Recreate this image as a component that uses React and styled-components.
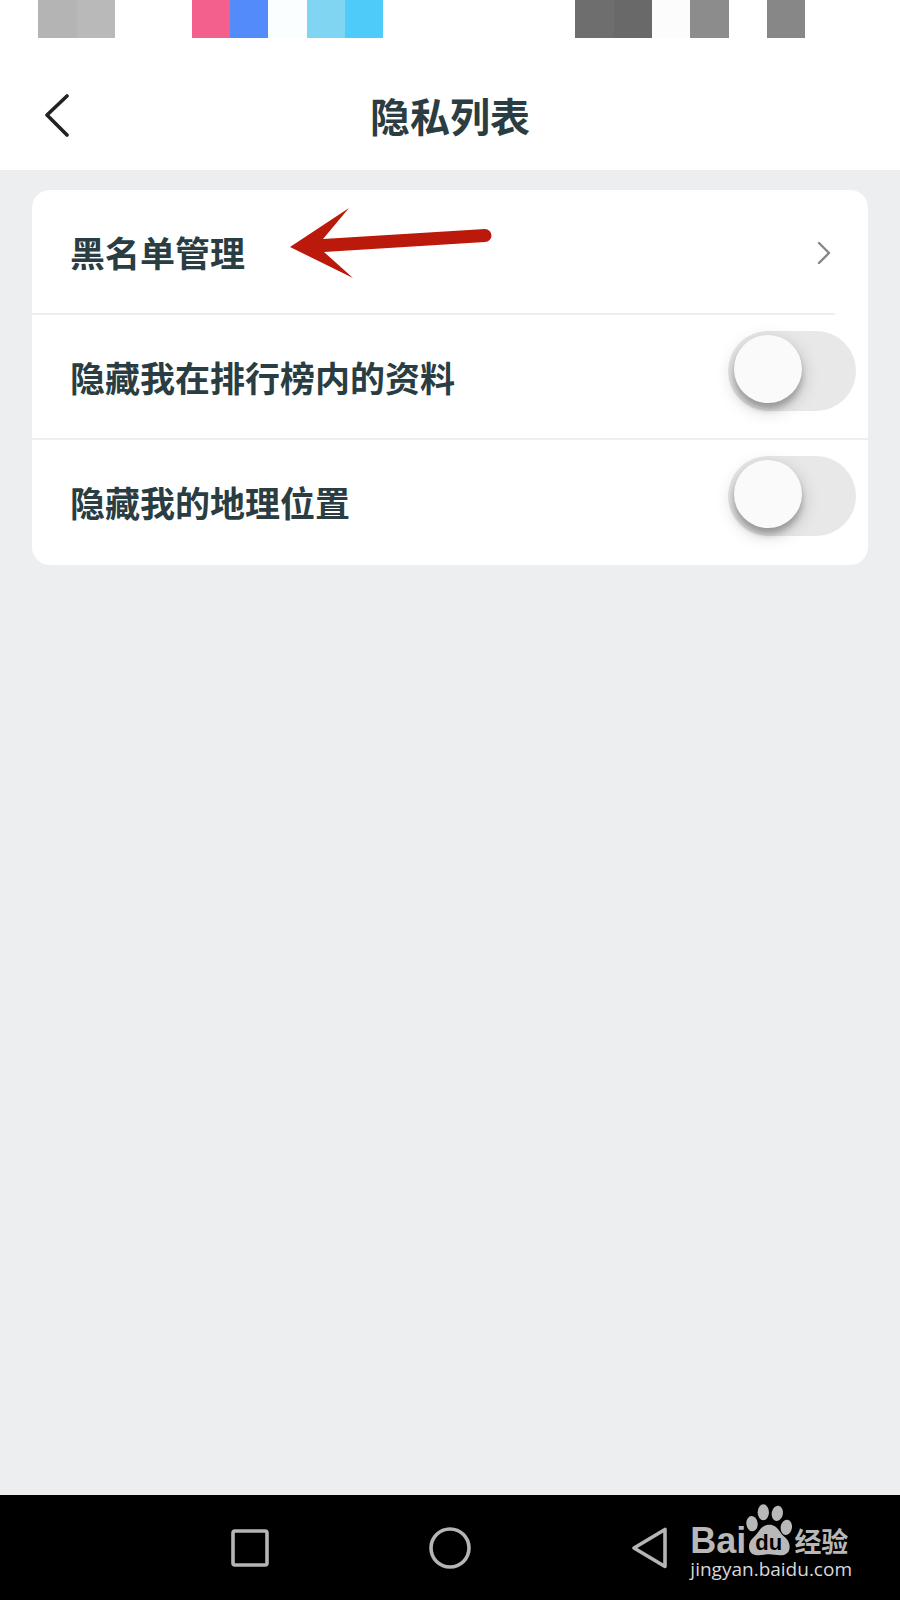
import React, { useState } from 'react'
import styled, { createGlobalStyle } from 'styled-components';


const statusBlocks = [
    { column: 2, color: '#b4b4b4' },
    { column: 3, color: '#b9b9b9' },
    { column: 6, color: '#f3608d' },
    { column: 7, color: '#538bfa' },
    { column: 8, color: '#fbfefe' },
    { column: 9, color: '#80d6f2' },
    { column: 10, color: '#4fcbfa' },
    { column: 16, color: '#6e6e6e' },
    { column: 17, color: '#696969' },
    { column: 18, color: '#fcfcfc' },
    { column: 19, color: '#8c8c8c' },
    { column: 21, color: '#878787' },
]

function Watermark() {
    return (
        <Mark>
            <Brand>
                <BrandLatin>Bai</BrandLatin>
                <Paw viewBox="0 0 126 156" aria-hidden="true">
                    <ellipse cx="12" cy="59" rx="17" ry="23" transform="rotate(-6 12 59)" />
                    <ellipse cx="46" cy="25" rx="17" ry="24" />
                    <ellipse cx="88" cy="28" rx="17" ry="23" transform="rotate(10 88 28)" />
                    <ellipse cx="115" cy="70" rx="17" ry="23" transform="rotate(8 115 70)" />
                    <path d="M64 62 C82 62 90 74 98 86 C108 100 125 106 125 128 C125 146 113 154 96 154 C84 154 76 151 64 151 C52 151 44 154 32 154 C14 154 3 145 3 128 C3 108 19 100 29 86 C39 73 46 62 64 62 Z" />
                    <text x="62" y="139" textAnchor="middle">du</text>
                </Paw>
                <BrandHan>经验</BrandHan>
            </Brand>
            <Site>jingyan.baidu.com</Site>
        </Mark>
    )
}

export default function App() {

    const [settings, setSettings] = useState({
        hideRanking: false,
        hideLocation: false
    })

    const onChange = (event) => {
        const { name, checked } = event.target;
        setSettings({ ...settings, [name]: checked })
    }

    return (
        <Page>
            <GlobalStyle />
            <StatusBar>
                {statusBlocks.map(({ column, color }) => (
                    <Block key={column} $column={column} $color={color} />
                ))}
            </StatusBar>
            <Header>
                <BackButton aria-label="返回">
                    <svg width="26" height="44" viewBox="0 0 26 44">
                        <path d="M24 3 L4 22 L24 42" />
                    </svg>
                </BackButton>
                <Title>隐私列表</Title>
            </Header>
            <Main>
                <Card>
                    <LinkRow href="#blacklist">
                        <Label as="span">黑名单管理</Label>
                        <RowChevron viewBox="0 0 14 24">
                            <path d="M2 2 L12 12 L2 22" />
                        </RowChevron>
                        <Arrow viewBox="0 0 204 74" aria-hidden="true">
                            <path d="M1 39 L60 0 L34 31 L196 21 A6.5 6.5 0 0 1 196 34 L35 44 L64 70 Z" />
                        </Arrow>
                    </LinkRow>
                    <Row>
                        <Label htmlFor="hideRanking">隐藏我在排行榜内的资料</Label>
                        <Switch id="hideRanking"
                            name="hideRanking"
                            type="checkbox"
                            checked={settings.hideRanking}
                            onChange={onChange} />
                    </Row>
                    <Row>
                        <Label htmlFor="hideLocation">隐藏我的地理位置</Label>
                        <Switch id="hideLocation"
                            name="hideLocation"
                            type="checkbox"
                            checked={settings.hideLocation}
                            onChange={onChange} />
                    </Row>
                </Card>
            </Main>
            <NavBar>
                <NavButton $column={2} aria-label="最近任务">
                    <svg width="42" height="42" viewBox="0 0 42 42">
                        <rect x="4" y="4" width="34" height="34" rx="2" />
                    </svg>
                </NavButton>
                <NavButton $column={3} aria-label="主屏幕">
                    <svg width="42" height="42" viewBox="0 0 42 42">
                        <circle cx="21" cy="21" r="19" />
                    </svg>
                </NavButton>
                <NavButton $column={4} aria-label="返回">
                    <svg width="42" height="42" viewBox="0 0 42 42">
                        <path d="M36 2.5 V39.5 L5 21 Z" />
                    </svg>
                </NavButton>
                <Watermark />
            </NavBar>
        </Page>
    )
}



// styled components
const GlobalStyle = createGlobalStyle`
* {
    box-sizing: border-box;
}

body {
    margin: 0;
    font-family: "Noto Sans CJK SC", sans-serif;
    color: #2a3d42;
}

button {
    padding: 0;
    border: none;
    background: none;
    cursor: pointer;
}

svg {
    display: block;
}
`

const Page = styled.div`
    display: flex;
    flex-direction: column;
    min-height: 100vh;
    background-color: #edeef0;
`

const StatusBar = styled.div`
    display: grid;
    grid-template-columns: repeat(23, 1fr);
    height: 38px;
    padding-right: 18px;
    background-color: white;
`

const Block = styled.div`
    grid-row: 1;
    grid-column: ${pr => pr.$column};
    background-color: ${pr => pr.$color};
`

const Header = styled.header`
    display: grid;
    grid-template-columns: 1fr auto 1fr;
    align-items: center;
    height: 132px;
    padding: 22px 43px 0;
    background-color: white;
`

const BackButton = styled.button`
    justify-self: start;

path {
    fill: none;
    stroke: #222;
    stroke-width: 3.6;
    stroke-linecap: round;
    stroke-linejoin: round;
}
`

const Title = styled.h1`
    margin: 0;
    font-size: 40px;
    line-height: 60px;
    font-weight: 700;
`

const Main = styled.main`
    flex: 1;
    padding: 20px 32px;
`

const Card = styled.section`
    border-radius: 18px;
    background-color: white;
`

const Row = styled.div`
    position: relative;
    display: flex;
    align-items: center;
    justify-content: space-between;
    height: 125px;
    padding: 0 12px 0 38px;

&:not(:last-child)::after {
    content: '';
    position: absolute;
    left: 0;
    right: ${pr => pr.href ? '33px' : '0'};
    bottom: 0;
    height: 2px;
    background-color: #eeeeef;
}
`

const LinkRow = styled(Row).attrs({ as: 'a' })`
    padding-right: 37px;
    color: inherit;
    text-decoration: none;
`

const Label = styled.label`
    padding-bottom: 2px;
    font-size: 35px;
    line-height: 52px;
    font-weight: 700;
`

const RowChevron = styled.svg`
    width: 14px;
    height: 24px;

path {
    fill: none;
    stroke: #868686;
    stroke-width: 2.4;
    stroke-linecap: round;
    stroke-linejoin: round;
}
`

const Arrow = styled.svg`
    position: absolute;
    top: 18px;
    left: 257px;
    width: 204px;
    height: 74px;
    fill: #bb190c;
`

const Switch = styled.input`
    appearance: none;
    align-self: flex-start;
    display: flex;
    align-items: flex-start;
    width: 128px;
    height: 80px;
    margin: 16px 0 0;
    padding: 4px 6px;
    border-radius: 40px;
    background-color: #e8e8e8;
    cursor: pointer;

&::before {
    content: '';
    width: 68px;
    height: 68px;
    border-radius: 50%;
    background-color: #fafafa;
    box-shadow: 0 6px 6px rgba(0, 0, 0, 0.22), 0 6px 18px rgba(0, 0, 0, 0.22);
}

&:checked {
    justify-content: flex-end;
    background-color: #4cd08a;
}
`

const NavBar = styled.nav`
    position: relative;
    display: grid;
    grid-template-columns: 3fr 4fr 4fr 4fr 3fr;
    align-items: center;
    height: 105px;
    background-color: black;
`

const NavButton = styled.button`
    grid-column: ${pr => pr.$column};
    justify-self: center;

svg {
    fill: none;
    stroke: #b5b5b5;
    stroke-width: 3.6;
    stroke-linejoin: round;
}
`

const Mark = styled.div`
    position: absolute;
    right: 48px;
    bottom: 18px;
    color: #b8b8b8;
`

const Brand = styled.div`
    display: flex;
    align-items: flex-end;
    height: 52px;
`

const BrandLatin = styled.span`
    font: 700 36px/30px "Liberation Sans", sans-serif;
`

const Paw = styled.svg`
    width: 42px;
    height: 52px;
    margin: 0 4px 0 2px;
    overflow: visible;
    fill: #b8b8b8;

text {
    fill: black;
    font: 700 66px "Liberation Sans", sans-serif;
}
`

const BrandHan = styled.span`
    font-size: 27px;
    line-height: 30px;
    font-weight: 700;
`

const Site = styled.div`
    color: #d8d8d8;
    font: 19px/26px "Open Sans", sans-serif;
`
